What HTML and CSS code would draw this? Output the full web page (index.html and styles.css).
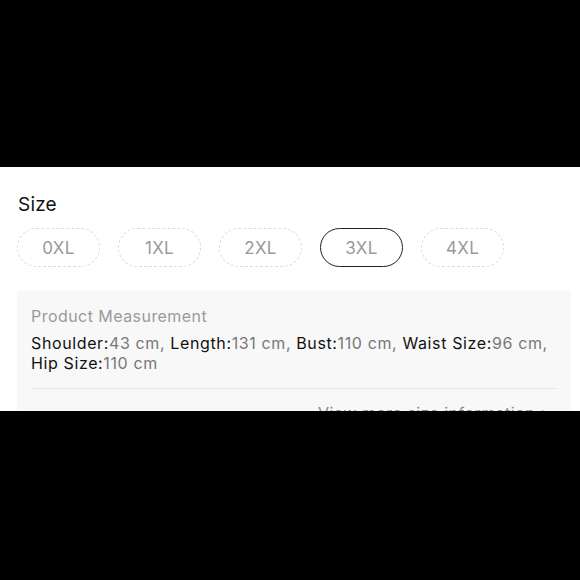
FILE: index.html
```html
<!DOCTYPE html>
<html>
<head>
<meta charset="utf-8">
<link rel="stylesheet" href="styles.css">
</head>
<body>
<div class="top-band"></div>
<section class="panel">
  <h2 class="title">Size</h2>
  <div class="chips">
    <span class="chip">0XL</span>
    <span class="chip">1XL</span>
    <span class="chip">2XL</span>
    <span class="chip selected">3XL</span>
    <span class="chip">4XL</span>
  </div>
  <div class="measure">
    <div class="measure-title">Product Measurement</div>
    <p class="measure-text"><span class="k">Shoulder:</span>43 cm, <span class="k">Length:</span>131 cm, <span class="k">Bust:</span>110 cm, <span class="k">Waist Size:</span>96 cm, <span class="k">Hip Size:</span>110 cm</p>
    <div class="divider"></div>
    <div class="more">View more size information &gt;</div>
  </div>
</section>
</body>
</html>
```

FILE: styles.css
```css
html, body {
  margin: 0;
  padding: 0;
  background: #000;
  height: 100%;
}
body {
  font-family: Inter, "Liberation Sans", Arial, sans-serif;
}
.top-band {
  height: 167px;
}
.panel {
  background: #fff;
  height: 244px;
  overflow: hidden;
  padding: 0 9px 0 17px;
  box-sizing: border-box;
}
.title {
  margin: 0;
  padding: 27px 0 0 1px;
  font-size: 19px;
  line-height: 22px;
  font-weight: normal;
  color: #111;
  letter-spacing: 0.2px;
}
.chips {
  display: flex;
  gap: 18px;
  margin-top: 12px;
}
.chip {
  box-sizing: border-box;
  width: 83px;
  height: 39px;
  border: 1px dashed #dcdcdc;
  border-radius: 20px;
  display: flex;
  align-items: center;
  justify-content: center;
  font-size: 17px;
  color: #9a9a9a;
  letter-spacing: 0.3px;
}
.chip.selected {
  border: 1.5px solid #222;
}
.measure {
  margin-top: 24px;
  background: #f8f8f8;
  padding: 15px 14px 20px 14px;
  letter-spacing: 0.45px;
}
.measure-title {
  font-size: 16px;
  line-height: 20px;
  color: #9a9a9a;
}
.measure-text {
  margin: 7px 0 0;
  font-size: 16px;
  line-height: 20px;
  color: #777;
  letter-spacing: 0.62px;
}
.measure-text .k {
  color: #111;
}
.divider {
  height: 1px;
  background: #e6e6e6;
  margin-top: 15px;
}
.more {
  text-align: right;
  font-size: 16px;
  line-height: 20px;
  color: #888;
  margin-top: 14px;
  padding-right: 6px;
}
```
